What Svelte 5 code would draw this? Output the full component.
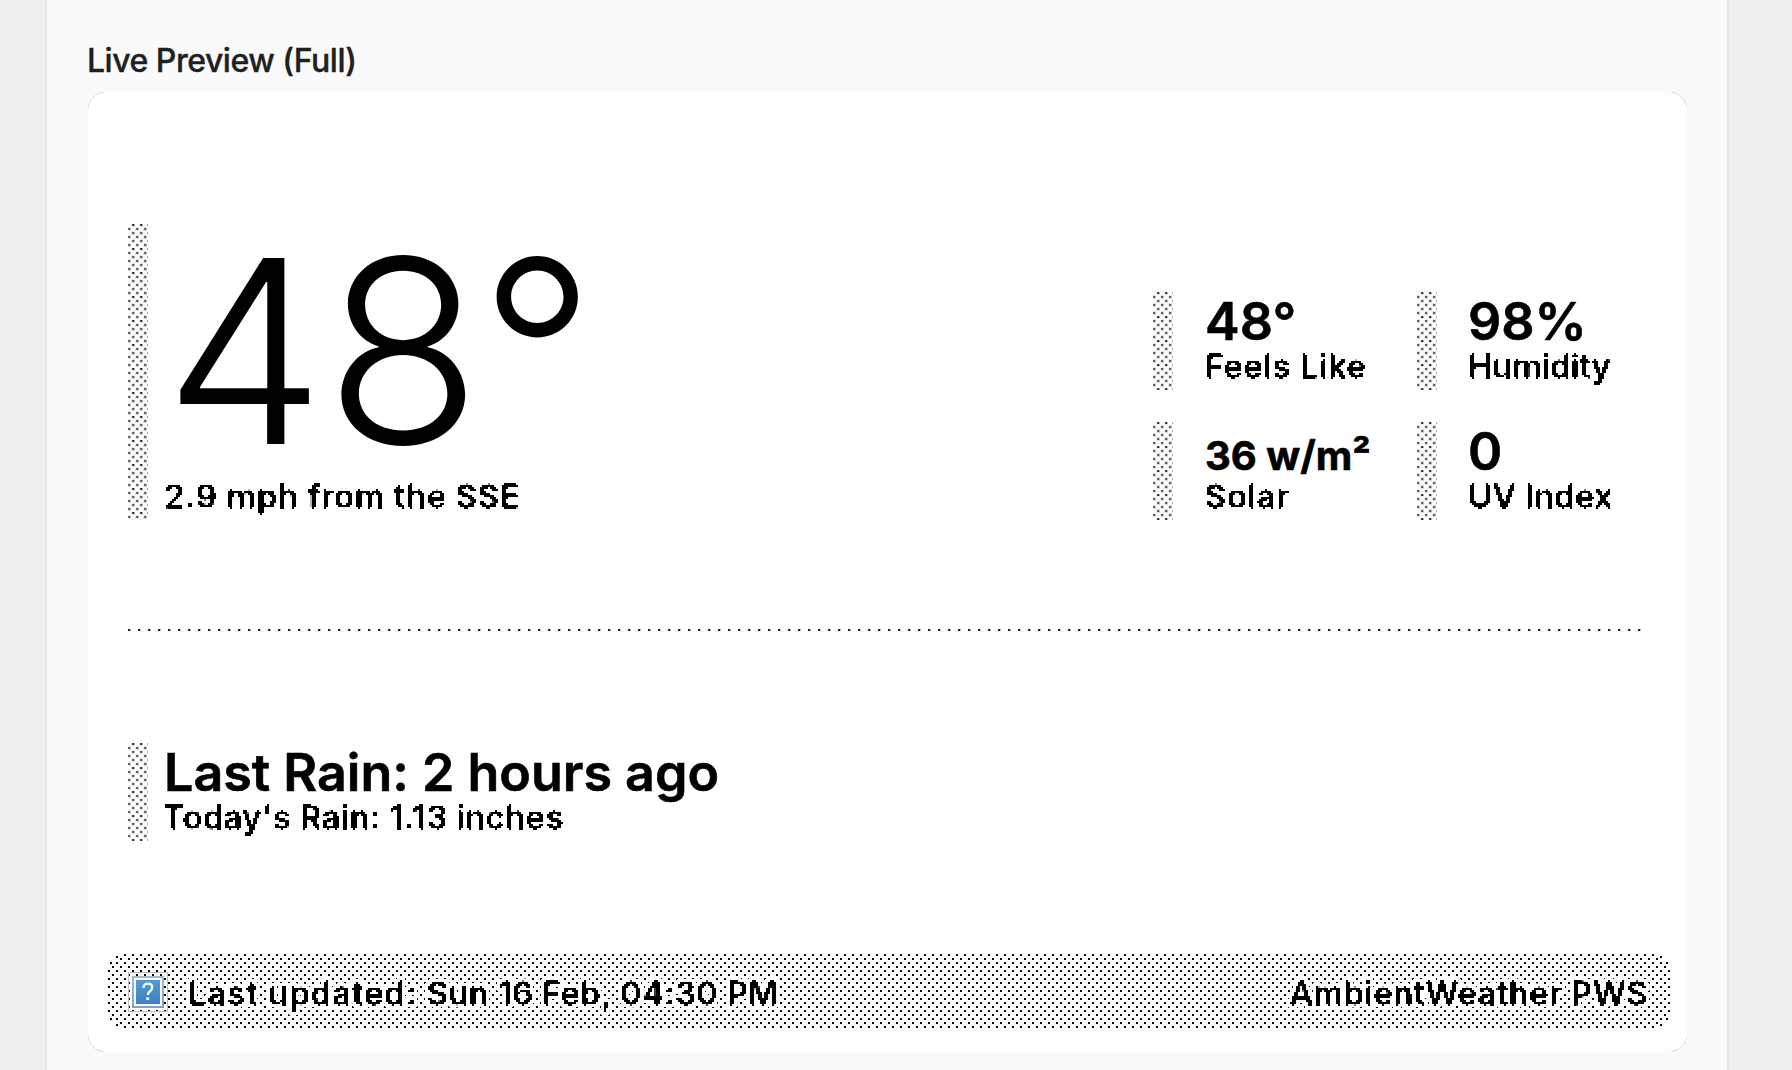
<script>
  const metrics = [
    { value: '48°', label: 'Feels Like', spacing: 0.6 },
    { value: '98%', label: 'Humidity', spacing: 0.05 },
    { value: '36 w/m²', label: 'Solar', spacing: 0.7, small: true },
    { value: '0', label: 'UV Index', spacing: 0.35 }
  ];
</script>

<svg class="defs" width="0" height="0" aria-hidden="true">
  <defs>
    <!-- snaps glyphs to a grid of 2px cells -->
    <filter id="pixel" x="-8" y="-8" width="700" height="60" filterUnits="userSpaceOnUse" color-interpolation-filters="sRGB">
      <feConvolveMatrix in="SourceGraphic" order="2" kernelMatrix="1 1 1 1" divisor="4" preserveAlpha="false" result="avg" />
      <feFlood x="1" y="0" width="1" height="1" flood-color="#000" />
      <feOffset dx="0" dy="0" x="0" y="0" width="2" height="2" />
      <feTile result="grid" />
      <feComposite in="avg" in2="grid" operator="in" />
      <feComponentTransfer result="s"><feFuncA type="linear" slope="60" intercept="-27" /></feComponentTransfer>
      <feOffset in="s" dx="-1" dy="0" result="a" />
      <feOffset in="s" dx="0" dy="-1" result="b" />
      <feOffset in="s" dx="-1" dy="-1" result="c" />
      <feMerge>
        <feMergeNode in="s" /><feMergeNode in="a" /><feMergeNode in="b" /><feMergeNode in="c" />
      </feMerge>
    </filter>
    <!-- white outline that keeps text legible over the dots -->
    <filter id="halo" x="-8" y="-8" width="700" height="60" filterUnits="userSpaceOnUse" color-interpolation-filters="sRGB">
      <feMorphology in="SourceAlpha" operator="dilate" radius="3" result="fat" />
      <feFlood flood-color="#fff" />
      <feComposite in2="fat" operator="in" result="h" />
      <feMerge><feMergeNode in="h" /><feMergeNode in="SourceGraphic" /></feMerge>
    </filter>
    <pattern id="bar-dots" width="8" height="24" patternUnits="userSpaceOnUse">
      {#each [0, 4, 8, 12, 16, 20] as y, i}
        {#each i % 2 ? [0, 8] : [4] as x}
          <rect x={x - 0.5} y={y - (i ? 0.5 : 0)} width="3.4" height={i ? 3.2 : 2.5} fill="#cccccc" />
          <rect x={x + 0.2} {y} width="2" height="2" fill={i ? '#585858' : '#2c2c2c'} />
        {/each}
      {/each}
    </pattern>
    <pattern id="foot-dots" width="8" height="8" patternUnits="userSpaceOnUse">
      <rect width="2" height="2" /><rect x="4" y="4" width="2" height="2" />
    </pattern>
    <pattern id="line-dots" width="10" height="2" patternUnits="userSpaceOnUse">
      <rect width="2" height="2" fill="#1c1c1c" /><rect x="2" width="1" height="2" fill="#b5b5b5" />
    </pattern>
    <linearGradient id="blue" x1="0" y1="0" x2="0" y2="1">
      <stop offset="0" stop-color="#4f9dd2" /><stop offset="1" stop-color="#3e7fc0" />
    </linearGradient>
    <linearGradient id="frame" x1="0" y1="0" x2="0" y2="1">
      <stop offset="0" stop-color="#9db9dd" /><stop offset="1" stop-color="#7f9fcc" />
    </linearGradient>
  </defs>
</svg>

{#snippet bar(h)}
  <svg class="bar" width="20" height={h}>
    <rect width="20" height={h} fill="url(#bar-dots)" />
    {#each Array(Math.ceil(h / 8)) as _, i}
      <rect x="19" y={i * 8} width="1" height="2" fill="#aaa" />
    {/each}
  </svg>
{/snippet}

<div class="page">
  <main class="panel">
    <h2>Live Preview (Full)</h2>
    <section class="card">
      <i class="corner tl"></i><i class="corner tr"></i><i class="corner bl"></i><i class="corner br"></i>
      <div class="top">
        <div class="item">
          {@render bar(296)}
          <div class="body">
            <div class="huge">48°</div>
            <div class="label wind">2.9 mph from the SSE</div>
          </div>
        </div>
        <div class="grid">
          {#each metrics as m}
            <div class="item wide">
              {@render bar(98)}
              <div class="body">
                <div class="value" class:small={m.small}>{m.value}</div>
                <div class="label" style="letter-spacing:{m.spacing}px">{m.label}</div>
              </div>
            </div>
          {/each}
        </div>
      </div>
      <svg class="divider" width="1514" height="2"><rect width="1513" height="2" fill="url(#line-dots)" /></svg>
      <div class="item rain">
        {@render bar(98)}
        <div class="body">
          <div class="value">Last Rain: 2 hours ago</div>
          <div class="label today">Today's Rain: 1.13 inches</div>
        </div>
      </div>
      <footer>
        <svg class="dots" width="1562" height="74">
          <polygon points="14,0 1548,0 1562,14 1562,60 1548,74 14,74 0,60 0,14" fill="url(#foot-dots)" />
          {#each [[8, 2], [2, 8]] as [x, y]}
            <rect {x} {y} width="2" height="2" />
            <rect x={1560 - x} {y} width="2" height="2" />
            <rect {x} y={72 - y} width="2" height="2" />
            <rect x={1560 - x} y={72 - y} width="2" height="2" />
          {/each}
        </svg>
        <svg class="icon" width="40" height="40" viewBox="0 0 40 40">
          <rect x=".5" y=".5" width="39" height="39" fill="none" stroke="#bcbcbc" />
          <rect x="4" y="4" width="32" height="32" fill="url(#frame)" />
          <rect x="6" y="6" width="28" height="28" fill="#fff" />
          <rect x="8" y="8" width="24" height="24" fill="url(#blue)" />
          <path d="M15.4 15.8c.2-2.7 2-4.2 4.5-4.2s4.4 1.5 4.4 3.9c0 3.6-4.4 3.6-4.4 7.4" fill="none" stroke="#fff" stroke-width="2.2" />
          <circle cx="19.7" cy="26.6" r="1.7" fill="#fff" />
        </svg>
        <div class="halo"><div class="label updated">Last updated: <span class="date">Sun 16 Feb, 04:30 PM</span></div></div>
        <div class="halo end"><div class="label station">AmbientWeather PWS</div></div>
      </footer>
    </section>
  </main>
</div>

<style>
  :global(body) { margin: 0; background: #efefef; }
  .defs { position: absolute; }
  .page {
    width: 1792px; height: 1070px; overflow: hidden; background: #efefef;
    font-family: Inter, "Liberation Sans", sans-serif; color: #000;
  }
  .panel {
    box-sizing: border-box; width: 1680px; height: 1070px; margin-left: 47px;
    padding: 41px 0 0 41px; background: #fafafa; box-shadow: 0 0 0 2px #e6e6e6;
  }
  h2 {
    margin: 0 0 11px -1px; font-size: 32px; line-height: 40px; font-weight: 500;
    letter-spacing: -0.48px; color: #1f1f1f; -webkit-text-stroke: 0.4px #1f1f1f;
  }
  .card {
    position: relative; box-sizing: border-box; width: 1599px; height: 960px;
    padding-top: 132px; background: #fff; border-radius: 16px; overflow: hidden;
    display: flex; flex-direction: column;
  }
  .corner { position: absolute; width: 16px; height: 16px; box-sizing: border-box; border: 0 solid #d6d6d6; }
  .tl { left: 0; top: 0; border-width: 1px 0 0 1px; border-radius: 16px 0 0 0; clip-path: polygon(0 10px, 10px 0, 16px 0, 0 16px); }
  .tr { right: 0; top: 0; border-width: 1px 1px 0 0; border-radius: 0 16px 0 0; clip-path: polygon(0 0, 6px 0, 16px 10px, 16px 16px); }
  .bl { left: 0; bottom: 0; border-width: 0 0 1px 1px; border-radius: 0 0 0 16px; clip-path: polygon(0 0, 0 6px, 10px 16px, 16px 16px); }
  .br { right: 0; bottom: 0; border-width: 0 1px 1px 0; border-radius: 0 0 16px 0; clip-path: polygon(0 16px, 6px 16px, 16px 6px, 16px 0); }
  .top { display: flex; justify-content: space-between; align-items: flex-end; height: 296px; padding: 0 6px 0 40px; }
  .item { display: flex; gap: 16px; }
  .wide { gap: 31px; }
  .wide:nth-child(odd) { gap: 32px; }
  .bar, .divider, .icon { display: block; flex: none; }
  .body { flex: 1; white-space: nowrap; }
  .huge { font-size: 256px; line-height: 254px; font-weight: 300; margin-bottom: 2px; }
  .value { height: 58px; font-size: 52px; line-height: 60px; font-weight: 600; -webkit-text-stroke: 0.6px #000; }
  .small { font-size: 40px; line-height: 67px; font-weight: 680; }
  .label { font-size: 32.6px; line-height: 33px; height: 33px; font-weight: 600; filter: url(#pixel); }
  .grid { display: grid; grid-template-columns: 264px 264px; row-gap: 32px; }
  .divider { margin: 109px 0 112px 40px; }
  .wind { letter-spacing: 0.8px; }
  .today { letter-spacing: 0.5px; margin-left: -1px; }
  .rain { margin-left: 40px; }
  footer {
    position: relative; display: flex; align-items: center; box-sizing: border-box;
    width: 1562px; height: 74px; margin: 113px 0 0 20px; padding: 5px 22px 0 20px;
  }
  .dots { position: absolute; left: 0; top: 0; }
  .icon { position: relative; margin-top: -4px; }
  .halo { position: relative; filter: url(#halo); margin-left: 20px; white-space: nowrap; }
  .end { margin-left: auto; }
  .updated { letter-spacing: 1.1px; }
  .date { letter-spacing: 0.45px; }
  .station { letter-spacing: 0.5px; }
</style>
